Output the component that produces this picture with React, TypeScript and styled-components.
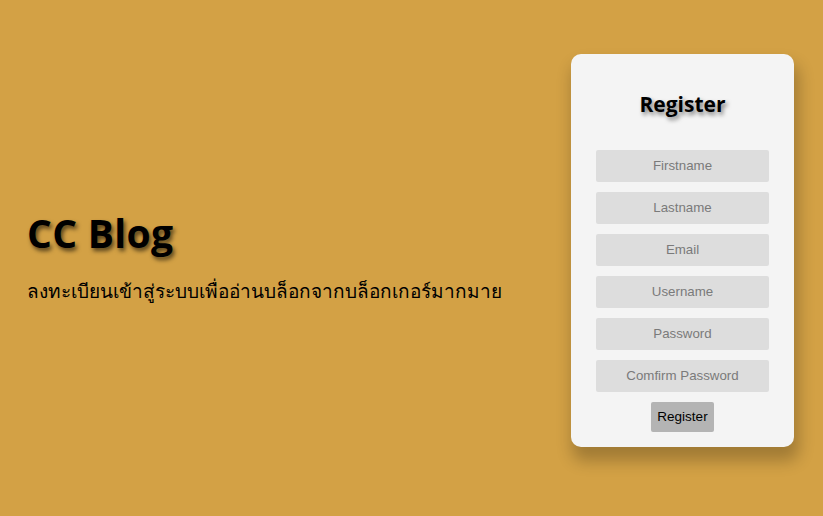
import React from "react";
import styled, { createGlobalStyle } from "styled-components";

const Global = createGlobalStyle`
  html, body { margin: 0; padding: 0; }
  body { background: #d3a145; font-family: "Open Sans", "Noto Sans", sans-serif; }
`;

const Page = styled.div`
  height: 516px;
  display: flex;
  align-items: center;
  justify-content: space-between;
  padding: 0 29px 0 27px;
  box-sizing: border-box;
`;

const Intro = styled.div`
  display: flex;
  flex-direction: column;
`;

const Title = styled.h1`
  margin: 0;
  font-family: "Open Sans", sans-serif;
  font-weight: 700;
  font-size: 39px;
  line-height: 46px;
  letter-spacing: 0.3px;
  color: #000;
  text-shadow: 2px 3px 4px rgba(0, 0, 0, 0.6);
`;

const Tagline = styled.p`
  margin: 20px 0 0;
  font-family: "Noto Sans", "DejaVu Sans", sans-serif;
  font-size: 19px;
  color: #000;
`;

const Card = styled.form`
  width: 223px;
  box-sizing: border-box;
  background: #f4f4f4;
  border-radius: 10px;
  padding: 30px 25px 15px;
  margin-bottom: 16px;
  display: flex;
  flex-direction: column;
  align-items: center;
  box-shadow: 3px 12px 16px 2px rgba(0, 0, 0, 0.24);
`;

const CardTitle = styled.h2`
  margin: 0 0 26px;
  font-family: "Open Sans", sans-serif;
  font-weight: 700;
  font-size: 21px;
  line-height: 40px;
  color: #000;
  text-shadow: 2px 3px 4px rgba(0, 0, 0, 0.5);
`;

const Fields = styled.div`
  display: flex;
  flex-direction: column;
  gap: 10px;
  width: 100%;
`;

const Input = styled.input`
  width: 100%;
  height: 32px;
  box-sizing: border-box;
  border: none;
  border-radius: 2px;
  background: #dddddd;
  text-align: center;
  font-family: "Liberation Sans", Arial, sans-serif;
  font-size: 13.3px;
  outline: none;
  &::placeholder { color: #7a7a7a; }
`;

const Button = styled.button`
  margin-top: 10px;
  height: 30px;
  padding: 0 6px;
  border: none;
  border-radius: 2px;
  background: #b4b4b4;
  color: #000;
  font-family: "Liberation Sans", Arial, sans-serif;
  font-size: 13.5px;
`;

const fields = [
  { p: "Firstname", t: "text" },
  { p: "Lastname", t: "text" },
  { p: "Email", t: "email" },
  { p: "Username", t: "text" },
  { p: "Password", t: "password" },
  { p: "Comfirm Password", t: "password" },
];

export default function App() {
  return (
    <>
      <Global />
      <Page>
        <Intro>
          <Title>CC Blog</Title>
          <Tagline>ลงทะเบียนเข้าสู่ระบบเพื่ออ่านบล็อกจากบล็อกเกอร์มากมาย</Tagline>
        </Intro>
        <Card onSubmit={(e) => e.preventDefault()}>
          <CardTitle>Register</CardTitle>
          <Fields>
            {fields.map((f) => (
              <Input key={f.p} type={f.t} placeholder={f.p} />
            ))}
          </Fields>
          <Button type="submit">Register</Button>
        </Card>
      </Page>
    </>
  );
}
